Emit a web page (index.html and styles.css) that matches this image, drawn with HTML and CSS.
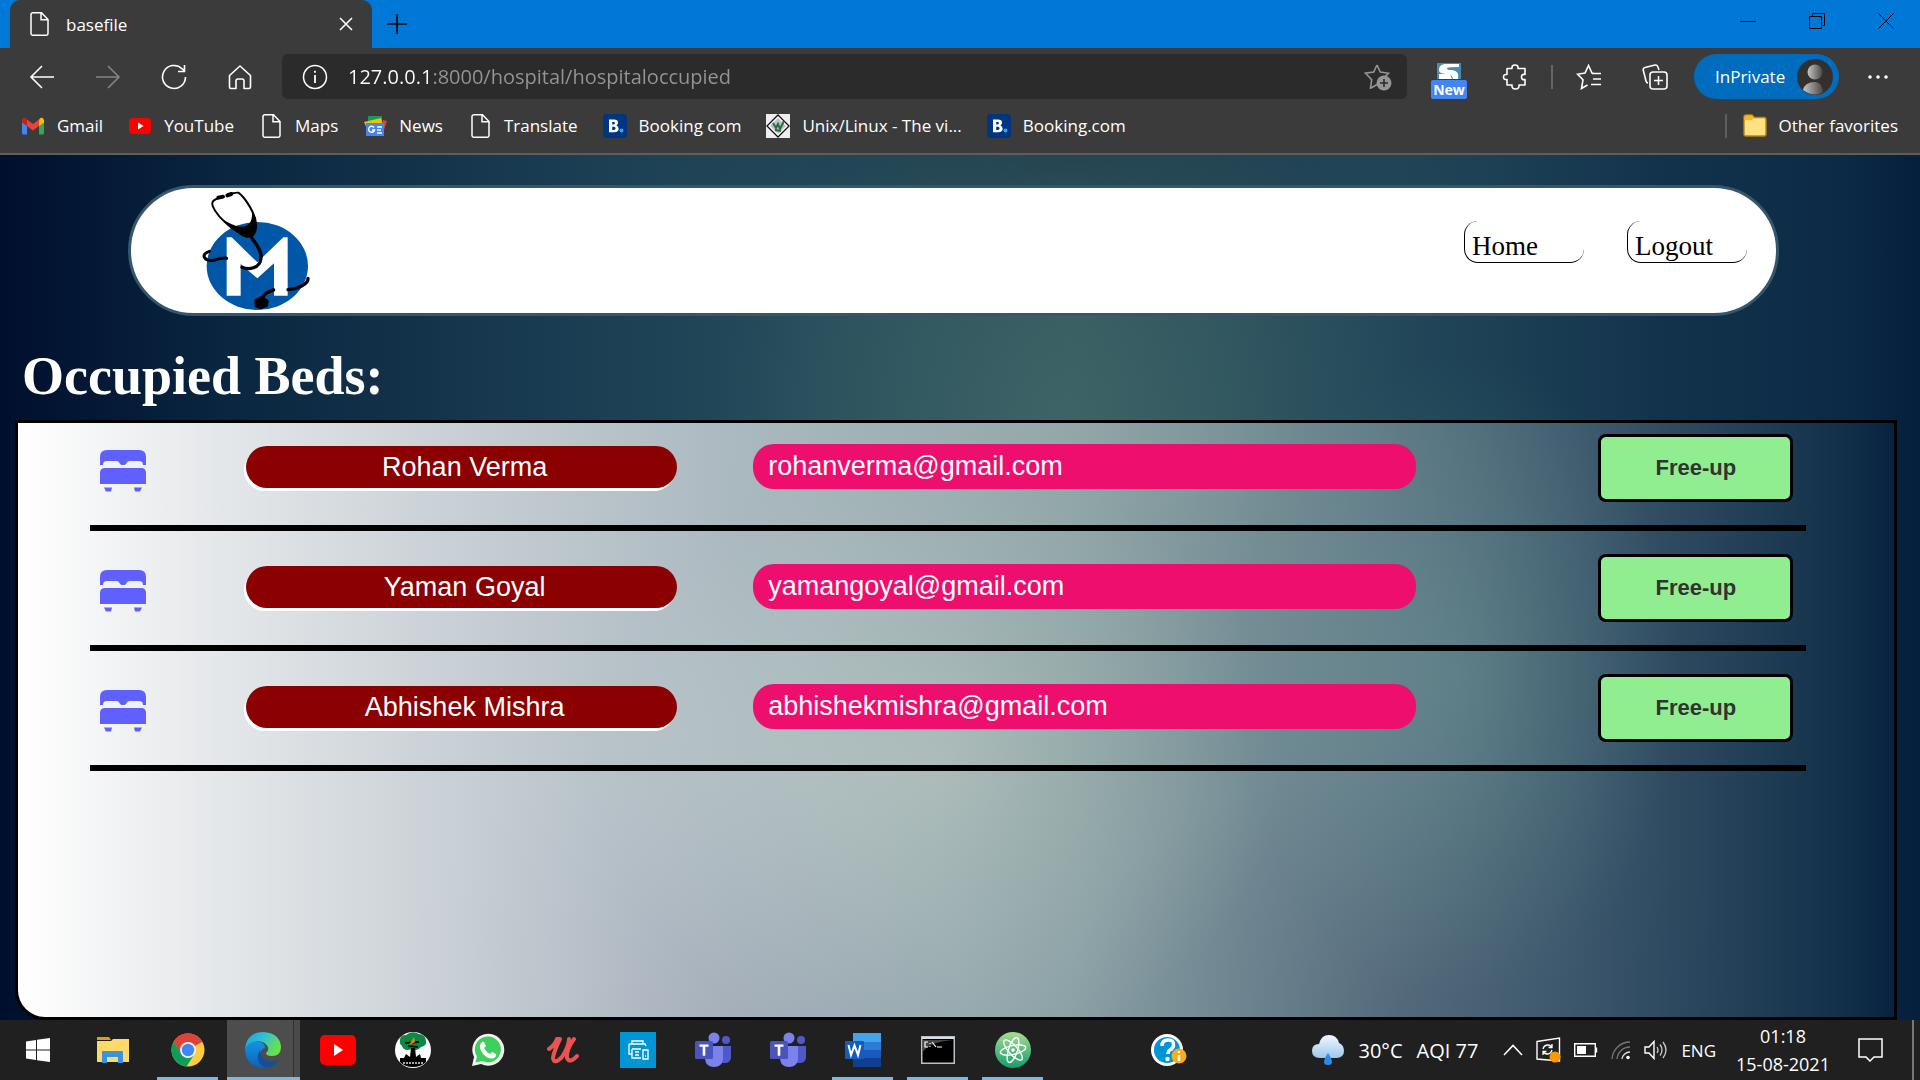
FILE: index.html
```html
<!DOCTYPE html>
<html lang="en">
<head>
<meta charset="utf-8">
<title>basefile</title>
<link rel="stylesheet" href="styles.css">
</head>
<body>
<svg class="defs" width="0" height="0" aria-hidden="true">
  <defs>
    <linearGradient id="edgeTop" x1="0" y1="0" x2="1" y2="0.4"><stop offset="0" stop-color="#1f9fdd"/><stop offset=".5" stop-color="#2fc0d8"/><stop offset="1" stop-color="#6ae04a"/></linearGradient>
    <linearGradient id="edgeBlue" x1="0" y1="0" x2="0" y2="1"><stop offset="0" stop-color="#1793e0"/><stop offset="1" stop-color="#0a63b8"/></linearGradient>
    <linearGradient id="cloud" x1="0" y1="0" x2="0" y2="1"><stop offset="0" stop-color="#f2f8ff"/><stop offset="1" stop-color="#9cc8ee"/></linearGradient>
    <linearGradient id="atomBg" x1="0" y1="0" x2="0" y2="1"><stop offset="0" stop-color="#a5dc90"/><stop offset="1" stop-color="#149e6e"/></linearGradient>
    <linearGradient id="avatarBg" x1="0" y1="0" x2="1" y2="0"><stop offset="0" stop-color="#c8c6c4"/><stop offset="1" stop-color="#4a4846"/></linearGradient>
    <symbol id="page" viewBox="0 0 24 24"><path d="M6 .8h8.500L21 7.500V21.500q0 1.700-1.700 1.700H5.700Q4 23.200 4 21.500V2.500Q4 .8 6 .8zM14 1v6.800h7" fill="none" stroke="#fff" stroke-width="1.500"/></symbol>
    <symbol id="booking" viewBox="0 0 24 24"><rect width="24" height="24" rx="4" fill="#003580"/><path d="M6 5.500h5q4 0 4 3.300 0 1.800-1.600 2.600 2.300.8 2.300 3.200 0 3.700-4.500 3.700H6zm3.200 2.400v2.500h1.300q1.500 0 1.500-1.300t-1.500-1.200zm0 4.800V16h1.600q1.800 0 1.800-1.700t-1.800-1.600z" fill="#fff" fill-rule="evenodd"/><circle cx="18.500" cy="16.500" r="2" fill="#35a8e8"/></symbol>
    <symbol id="bed" viewBox="0 0 46 42"><path d="M0 15V7q0-7 7-7h32q7 0 7 7v8h-3q0-4-4-4h-9q-3 0-4 3l-1.500 1h-3L20 14q-1-3-4-3H7q-4 0-4 4zM0 34V23q0-5 5-5h36q5 0 5 5v11zM4 37.500h8L11 41.500H6zM34 37.500h8l-2 4h-5z" fill="#6060ff"/></symbol>
    <symbol id="teams" viewBox="0 0 36 36"><circle cx="31" cy="8" r="4" fill="#5059c9"/><path d="M25 14h11v12q-1 5-6 5h-5z" fill="#5059c9"/><circle cx="19" cy="6" r="5.500" fill="#7b83eb"/><path d="M10 14h18v13q-1 8-9 8t-9-8z" fill="#7b83eb"/><rect y="9" width="18" height="18" rx="1.500" fill="#4b53bc"/><path d="M4.500 12.500h9v2.300h-3.200v9H7.700v-9H4.500z" fill="#fff"/></symbol>
  </defs>
</svg>

<header class="browser">
  <div class="titlebar">
    <div class="tab">
      <svg class="ico24" aria-hidden="true"><use href="#page"/></svg>
      <span class="tab-title">basefile</span>
      <button class="plain tab-close" aria-label="Close tab"><svg width="14" height="14" viewBox="0 0 14 14"><path d="M1 1l12 12M13 1L1 13" stroke="#fff" stroke-width="1.600"/></svg></button>
    </div>
    <button class="plain new-tab" aria-label="New tab"><svg width="22" height="22" viewBox="0 0 22 22"><path d="M11 1v20M1 11h20" stroke="#000" stroke-width="1.600"/></svg></button>
    <div class="window-controls">
      <button class="plain" aria-label="Minimize"><svg width="16" height="16" viewBox="0 0 16 16"><path d="M0 8.500h16" stroke="#000"/></svg></button>
      <button class="plain" aria-label="Restore"><svg width="16" height="16" viewBox="0 0 16 16"><path d="M.5 3.500h12v12H.5zM3.500 3V.5h12v12H13" fill="none" stroke="#000"/></svg></button>
      <button class="plain" aria-label="Close"><svg width="16" height="16" viewBox="0 0 16 16"><path d="M.5.5l15 15M15.500.5l-15 15" stroke="#000"/></svg></button>
    </div>
  </div>

  <div class="toolbar">
    <button class="plain tool" aria-label="Back"><svg width="26" height="26" viewBox="0 0 26 26"><path d="M25 13H2M13 2L2 13l11 11" fill="none" stroke="#fff" stroke-width="1.600"/></svg></button>
    <button class="plain tool" aria-label="Forward"><svg width="26" height="26" viewBox="0 0 26 26"><path d="M1 13h23M13 2l11 11-11 11" fill="none" stroke="#848484" stroke-width="1.600"/></svg></button>
    <button class="plain tool" aria-label="Refresh"><svg width="26" height="26" viewBox="0 0 26 26"><path d="M24.500 13a11.500 11.500 0 1 1-3.500-8.300L23.500 7M23.500 1v6.500H17" fill="none" stroke="#fff" stroke-width="1.600"/></svg></button>
    <button class="plain tool" aria-label="Home"><svg width="26" height="26" viewBox="0 0 26 26"><path d="M13 2L2.500 11.500V23q0 1.500 1.500 1.500h5V17q0-2 2-2h4q2 0 2 2v7.500h5q1.500 0 1.500-1.500V11.500z" fill="none" stroke="#fff" stroke-width="1.600" stroke-linejoin="round"/></svg></button>
    <div class="address">
      <svg width="26" height="26" viewBox="0 0 26 26" aria-hidden="true"><circle cx="13" cy="13" r="11.500" fill="none" stroke="#fff" stroke-width="1.500"/><path d="M13 11v8M13 6.800v2" stroke="#fff" stroke-width="1.800"/></svg>
      <input class="url" type="text" aria-label="Address" value="127.0.0.1:8000/hospital/hospitaloccupied">
      <button class="plain" aria-label="Add to favorites"><svg width="28" height="28" viewBox="0 0 28 28"><path d="M13 2l3.300 7 8.200 1.200-5 5M8 24.500l-1.500.5 1.200-8.300L1.500 10.200 9.700 9 13 2M7 25l6-3.500" fill="none" stroke="#959595" stroke-width="1.600"/><circle cx="20" cy="20" r="7.500" fill="#959595"/><path d="M20 16v8M16 20h8" stroke="#2b2b2b" stroke-width="1.600"/></svg></button>
    </div>
    <div class="extensions">
      <button class="plain tool new-ext" aria-label="Extension"><svg width="24" height="16" viewBox="0 0 24 16"><path d="M0 0h24v16H0z" fill="#4b89b5"/><path d="M22 1H8Q1 2 2 8q1 3 8 3 5 0 6 5h5q2-8-6-9-6 0-5-2 2-1 12-1z" fill="#fff"/><path d="M2 11h11l2 5H2z" fill="#fff"/></svg><span class="new-badge">New</span></button>
      <button class="plain tool" aria-label="Extensions"><svg width="26" height="26" viewBox="0 0 26 26"><path d="M6 4.500h4q-.5-3.500 3-3.500t3 3.500h7v6q-3.500-.8-3.500 2.500T23 15.500V21h-6q.5 4-3.500 4T10 21H5v-5.500Q1.500 16 1.500 13T5 10.500v-6z" fill="none" stroke="#fff" stroke-width="1.600" stroke-linejoin="round"/></svg></button>
      <span class="divider"></span>
      <button class="plain tool" aria-label="Favorites"><svg width="26" height="26" viewBox="0 0 26 26"><path d="M18 9.500l-2-.5-3.500-7.500L9 9 1.500 10.200l5.500 5.600L5.500 24.500l6-3.500M16 9.500h9M17 15h8M15 20.500h10" fill="none" stroke="#fff" stroke-width="1.600"/></svg></button>
      <button class="plain tool" aria-label="Collections"><svg width="26" height="26" viewBox="0 0 26 26"><path d="M6 19q-1.500 0-2-2L1.200 6Q1 4 3 3.500L13 1q2-.3 2.700 1.500L17 6" fill="none" stroke="#fff" stroke-width="1.600"/><rect x="8" y="8" width="17" height="17" rx="3" fill="none" stroke="#fff" stroke-width="1.600"/><path d="M16.500 12v9M12 16.500h9" stroke="#fff" stroke-width="1.600"/></svg></button>
      <button class="plain profile">InPrivate<svg width="36" height="36" viewBox="0 0 36 36" aria-hidden="true"><circle cx="18" cy="18" r="18" fill="#323130"/><circle cx="18" cy="13" r="7.500" fill="url(#avatarBg)"/><path d="M6 31q2-8 12-8 7 0 8 10-9 6-20-2z" fill="url(#avatarBg)"/></svg></button>
      <button class="plain tool" aria-label="Settings and more"><svg width="20" height="6" viewBox="0 0 20 6"><circle cx="2" cy="3" r="1.800" fill="#fff"/><circle cx="10" cy="3" r="1.800" fill="#fff"/><circle cx="18" cy="3" r="1.800" fill="#fff"/></svg></button>
    </div>
  </div>

  <nav class="bookmarks" aria-label="Favorites bar">
    <a href="#"><svg class="ico24" viewBox="0 0 24 24"><path d="M1 6v13q0 1.500 1.500 1.500H6V10z" fill="#4285f4"/><path d="M23 6v13q0 1.500-1.500 1.500H18V10z" fill="#34a853"/><path d="M18 5.500V12l5-3.500V6q-1-3-3.500-2z" fill="#fbbc04"/><path d="M1 6v2.500l5 3.500V5.500L4.500 4Q1 3.500 1 6z" fill="#c5221f"/><path d="M6 5.500V12l6 4.500 6-4.500V5.500L12 10z" fill="#ea4335"/></svg>Gmail</a>
    <a href="#"><svg class="ico24" viewBox="0 0 24 24"><rect x="1" y="4" width="22" height="16" rx="4" fill="#f00"/><path d="M10 8.500v7l5.500-3.500z" fill="#fff"/></svg>YouTube</a>
    <a href="#"><svg class="ico24"><use href="#page"/></svg>Maps</a>
    <a href="#"><svg class="ico24" viewBox="0 0 24 24"><path d="M5 2h14v8H5z" fill="#0f9d58"/><path d="M1 8l17-4 3 10-15 5z" fill="#fbbc04"/><path d="M20 6l4 1-4 12z" fill="#db4437"/><path d="M3 9h18v13H3z" fill="#4285f4"/><path d="M11 13.500a3 3 0 1 0 .5 2.500H9M14 13h5M14 16h4M14 19h5" fill="none" stroke="#fff" stroke-width="1.400"/></svg>News</a>
    <a href="#"><svg class="ico24"><use href="#page"/></svg>Translate</a>
    <a href="#"><svg class="ico24"><use href="#booking"/></svg>Booking com</a>
    <a href="#"><svg class="ico24" viewBox="0 0 24 24"><path d="M0 0h24v24H0z" fill="#eee"/><path d="M12 1l11 11-11 11L1 12z" fill="#fff" stroke="#111" stroke-width="1.300"/><path d="M12 4l8 8-8 8-8-8z" fill="#bdc4c0"/><path d="M7 9l3 5 2-4 2 5 4-8M9 16l6 1" fill="none" stroke="#2d6a44" stroke-width="2"/></svg>Unix/Linux - The vi...</a>
    <a href="#"><svg class="ico24"><use href="#booking"/></svg>Booking.com</a>
    <a href="#" class="other"><svg class="ico24" viewBox="0 0 24 24"><path d="M1 3q0-2 2-2h6l2 2.500h10q2 0 2 2V20q0 2-2 2H3q-2 0-2-2z" fill="#ffe082" stroke="#b8860b" stroke-width="1.400"/><path d="M1.500 6V3q0-1.500 1.500-1.500h6l2 2L9 6z" fill="#f5b91c"/></svg>Other favorites</a>
  </nav>
</header>

<main class="site">
  <nav class="navbar" aria-label="Main">
    <svg class="logo" viewBox="240 55 336 369" role="img" aria-label="Medical logo">
      <ellipse cx="412" cy="286" rx="152" ry="132" fill="#0057a8"/>
      <path d="M320 200h15l77 75 78-75h13v175h-41v-97l-50 45-50-43v95h-42z" fill="#fff"/>
      <g fill="none" stroke="#000" stroke-linecap="round">
        <path d="M296 82C278 88 274 95 278 106 286 128 308 150 335 172" stroke-width="6"/>
        <path d="M325 72Q345 65 355 66C372 78 398 115 405 145" stroke-width="6"/>
        <path d="M295 81l14-3M322 74l12-4" stroke-width="12"/>
        <path d="M392 195C405 220 425 235 423 262 420 295 385 298 366 290" stroke-width="10"/>
        <path d="M268 242C240 250 252 275 285 268 300 262 310 261 320 263" stroke-width="9"/>
        <path d="M564 323C565 340 535 355 504 357M461 358C440 362 430 372 425 388" stroke-width="10"/>
      </g>
      <path d="M302 142C335 165 362 172 377 166 393 160 397 145 396 122L408 142C415 170 410 188 398 198 388 205 372 200 360 192 340 180 318 160 302 142z"/>
      <path d="M405 388l20-10 19 12-2 16-20 8-16-6z" stroke="#000" stroke-width="4" stroke-linejoin="round"/>
    </svg>
    <div class="nav-links">
      <a href="#">Home</a>
      <a href="#">Logout</a>
    </div>
  </nav>

  <h1>Occupied Beds:</h1>

  <section class="panel" aria-label="Occupied beds">
    <table class="beds">
      <colgroup><col class="col-icon"><col class="col-name"><col class="col-email"><col class="col-action"></colgroup>
      <tbody>
        <tr><td><svg class="bed" role="img" aria-label="Bed"><use href="#bed"/></svg></td><td><span class="pill name">Rohan Verma</span></td><td><span class="pill email">rohanverma@gmail.com</span></td><td><button class="free">Free-up</button></td></tr>
        <tr><td><svg class="bed" role="img" aria-label="Bed"><use href="#bed"/></svg></td><td><span class="pill name">Yaman Goyal</span></td><td><span class="pill email">yamangoyal@gmail.com</span></td><td><button class="free">Free-up</button></td></tr>
        <tr><td><svg class="bed" role="img" aria-label="Bed"><use href="#bed"/></svg></td><td><span class="pill name">Abhishek Mishra</span></td><td><span class="pill email">abhishekmishra@gmail.com</span></td><td><button class="free">Free-up</button></td></tr>
      </tbody>
    </table>
  </section>
</main>

<footer class="taskbar">
  <div class="apps">
    <button class="plain app" aria-label="Start"><svg width="24" height="24" viewBox="0 0 24 24"><path d="M0 3.500L10 2v9.500H0zM11 1.800L24 0v11.500H11zM0 12.500h10V22L0 20.500zM11 12.500h13V24l-13-1.800z" fill="#fff"/></svg></button>
    <button class="plain app" aria-label="File Explorer"><svg width="32" height="32" viewBox="0 0 32 32"><path d="M0 3h12l2 3H0z" fill="#e0a100"/><path d="M0 7h14l2-2h16v23H0z" fill="#ffd96a"/><path d="M5 29V18q0-1 1-1h19q1 0 1 1v11h-5v-6H10v6z" fill="#3a94dc"/></svg></button>
    <button class="plain app open" aria-label="Chrome"><svg width="34" height="34" viewBox="0 0 34 34"><circle cx="17" cy="17" r="16.500" fill="#ffcd40"/><path d="M17 17L2.700 8.700A16.500 16.500 0 0 1 31.300 8.700z" fill="#db4437"/><path d="M17 9h14.400a16.500 16.500 0 0 0-28.700-.3L10 21z" fill="#db4437"/><path d="M2.700 8.700A16.500 16.500 0 0 0 15.500 33.400L23 22l-6-5-7 3z" fill="#0f9d58"/><circle cx="17" cy="17" r="8" fill="#f1f1f1"/><circle cx="17" cy="17" r="6.200" fill="#4285f4"/></svg></button>
    <button class="plain app open active" aria-label="Edge"><svg width="36" height="36" viewBox="0 0 36 36"><path d="M0 18Q1 9 9 9q11 0 11 7-6 2-5 9 2 7 10 7 5-1 8-4-4 8-14 8Q1 35 0 18z" fill="url(#edgeBlue)"/><path d="M0 17Q2 0 18 0q17 1 18 15 0 9-9 9-6 0-6-3 3-2 2-6Q20 9 12 9 4 9 0 17z" fill="url(#edgeTop)"/><path d="M15 18q-6 10 4 17.500 10 1 15-8-8 4-14 0-5-3-5-9.500z" fill="#144f9e"/></svg></button>
    <button class="plain app" aria-label="YouTube"><svg width="36" height="30" viewBox="0 0 36 30"><rect width="36" height="30" rx="5" fill="#f00"/><path d="M14 9v12l9-6z" fill="#fff"/></svg></button>
    <button class="plain app" aria-label="Tree logo"><svg width="36" height="36" viewBox="0 0 36 36"><circle cx="18" cy="18" r="18" fill="#fff"/><path d="M5 8q0-5 6-5 6-5 13-1 7 1 7 7 1 5-5 6-4 5-9 2-8 3-10-3-3-2-2-6z" fill="#0b8a43"/><path d="M10 11l14-1M13 14l10 1" stroke="#111" stroke-width="2"/><path d="M19 5l-5 8 6-3z" fill="#f47c20"/><path d="M16 16h4l1 9 4-3 1 4h5v4q-5 5-13 5T5 30v-4h4l2-4 4 3z" fill="#000"/><path d="M8 31h20" stroke="#ddd" stroke-width="1.500" stroke-dasharray="2 1"/></svg></button>
    <button class="plain app" aria-label="WhatsApp"><svg width="34" height="34" viewBox="0 0 34 34"><path d="M1 33l2-9A16 16 0 1 1 10 31z" fill="#f4f4f4"/><path d="M4.500 29.500l1.500-6A13 13 0 1 1 11 28z" fill="#3fcf5d"/><path d="M11 9q2-1 3 2l1 2-2 2q2 4 6 6l2-2 4 2q1 2-2 4-5 2-11-4-6-8-1-12z" fill="#fff"/></svg></button>
    <button class="plain app" aria-label="Udemy"><svg width="32" height="28" viewBox="0 0 32 28"><path d="M2 13Q8 9 10 3L13 3Q7 15 6 22q1 7 9-1Q22 10 22 3M27 3Q19 14 20 22q3 6 10-2" fill="none" stroke="#eb5252" stroke-width="4" stroke-linecap="round" stroke-linejoin="round"/></svg></button>
    <button class="plain app" aria-label="Printer"><svg width="36" height="36" viewBox="0 0 36 36"><path d="M0 0h36v36H0z" fill="#0096d6"/><path d="M12 12V9h11v3M12 22H9V13q0-1 1-1h15l1 2M12 17h9M12 17v9h9M15 20h4M15 23h4M23 18h5v9h-5zM25 24h1" fill="none" stroke="#fff" stroke-width="1.300"/></svg></button>
    <button class="plain app" aria-label="Teams"><svg width="36" height="36"><use href="#teams"/></svg></button>
    <button class="plain app" aria-label="Teams chat"><svg width="36" height="36"><use href="#teams"/></svg></button>
    <button class="plain app open" aria-label="Word"><svg width="36" height="34" viewBox="0 0 36 34"><path d="M8 0h28v9H8z" fill="#41a5ee"/><path d="M8 9h28v8H8z" fill="#2b7cd3"/><path d="M8 17h28v8H8z" fill="#185abd"/><path d="M8 25h28v9H8z" fill="#103f91"/><rect y="8" width="19" height="18" rx="1" fill="#185abd"/><path d="M3.500 12l2.500 10 3.500-9.500L13 22l2.500-10" fill="none" stroke="#fff" stroke-width="2"/></svg></button>
    <button class="plain app open" aria-label="Command Prompt"><svg width="34" height="28" viewBox="0 0 34 28"><path d="M.5.5h33v27H.5z" fill="#000" stroke="#b8c0c8" stroke-width="2"/><path d="M1 1h32v2H1z" fill="#d8dde2"/><path d="M2 4h30Q8 6 2 16z" fill="#444"/><path d="M7 6H4v5h3M9 7v1M9 10v1M11 6l4 5M16 11h5" fill="none" stroke="#fff" stroke-width="1.200"/></svg></button>
    <button class="plain app open" aria-label="Atom"><svg width="36" height="36" viewBox="0 0 36 36"><circle cx="18" cy="18" r="18" fill="url(#atomBg)"/><g fill="none" stroke="#fff" stroke-width="1.400"><ellipse cx="18" cy="18" rx="13" ry="4.500" transform="rotate(-12 18 18)"/><ellipse cx="18" cy="18" rx="13" ry="4.500" transform="rotate(48 18 18)"/><ellipse cx="18" cy="18" rx="13" ry="4.500" transform="rotate(108 18 18)"/></g><circle cx="18" cy="18" r="1.800" fill="#fff"/></svg></button>
  </div>
  <button class="plain help" aria-label="Help"><svg width="36" height="32" viewBox="0 0 36 32"><circle cx="16" cy="16" r="16" fill="#fff"/><circle cx="16" cy="16" r="13" fill="#0096d6"/><path d="M11 12q0-6 6-6t5.500 5q0 3-3.500 5-2 1-2 4" fill="none" stroke="#fff" stroke-width="3.500"/><circle cx="16.500" cy="25" r="2.200" fill="#fff"/><circle cx="28" cy="22" r="7.500" fill="#f9ab18"/><path d="M28 21v6M28 17v2" stroke="#fff" stroke-width="2.400"/></svg></button>
  <div class="tray">
    <button class="plain weather"><svg width="32" height="30" viewBox="0 0 32 30" aria-hidden="true"><path d="M8 23Q0 23 0 16t7-7Q9 0 17 0t10 8q5 2 5 8t-7 7z" fill="url(#cloud)"/><path d="M16 18q8 12 0 12t0-12z" fill="#2c8be8"/></svg><span>30°C</span><span>AQI 77</span></button>
    <button class="plain" aria-label="Hidden icons"><svg width="20" height="12" viewBox="0 0 20 12"><path d="M1 11L10 1.500 19 11" fill="none" stroke="#fff" stroke-width="1.600"/></svg></button>
    <button class="plain" aria-label="Update"><svg width="25" height="26" viewBox="0 0 25 26"><path d="M1 4.500L23.500 1v23L1 22z" fill="none" stroke="#fff" stroke-width="1.400"/><path d="M7 12q1-4 5-4 2 0 4 2M16 7v3.500h-3.500M16 13q-1 4-5 4-2 0-4-2M7 18v-3.500h3.500" fill="none" stroke="#fff" stroke-width="1.300"/><circle cx="19" cy="20" r="5.500" fill="#ff9800"/></svg></button>
    <button class="plain" aria-label="Battery"><svg width="24" height="14" viewBox="0 0 24 14"><path d="M.7.700h20.600v12.600H.7zM22.500 4.500v5" fill="none" stroke="#fff" stroke-width="1.400"/><path d="M3 3h9v8H3z" fill="#fff"/></svg></button>
    <button class="plain" aria-label="Network"><svg width="20" height="20" viewBox="0 0 20 20"><path d="M1 19A18 18 0 0 1 19 2M6 19A13 13 0 0 1 19 7" fill="none" stroke="#777" stroke-width="1.300"/><path d="M11 19a8 8 0 0 1 8-7" fill="none" stroke="#ddd" stroke-width="1.400"/><circle cx="17" cy="17.500" r="1.800" fill="#fff"/></svg></button>
    <button class="plain" aria-label="Volume"><svg width="24" height="20" viewBox="0 0 24 20"><path d="M1 7h4l5-5.500v17L5 13H1z" fill="none" stroke="#fff" stroke-width="1.400"/><path d="M13 7q2 3 0 6M16 4.500q4 5.500 0 11M19 2q6 8 0 16" fill="none" stroke="#ccc" stroke-width="1.300"/></svg></button>
    <button class="plain lang">ENG</button>
    <button class="plain clock"><span>01:18</span><span>15-08-2021</span></button>
    <button class="plain notes" aria-label="Notifications"><svg width="25" height="24" viewBox="0 0 25 24"><path d="M1 1h23v18h-8l-4 4-4-4H1z" fill="none" stroke="#fff" stroke-width="1.500"/></svg></button>
    <span class="show-desktop"></span>
  </div>
</footer>
</body>
</html>
```
FILE: styles.css
```css
* { box-sizing: border-box; }
body {
  margin: 0;
  min-height: 100vh;
  display: flex;
  flex-direction: column;
  font-family: "Open Sans", "Noto Sans", sans-serif;
  color: #fff;
  background: #001130;
}
svg { display: block; flex: none; }
.defs { position: absolute; }
a { color: inherit; text-decoration: none; }
.plain {
  border: 0;
  padding: 0;
  background: none;
  color: inherit;
  font: inherit;
  display: flex;
  align-items: center;
  justify-content: center;
}
.ico24 { width: 24px; height: 24px; }

/* Browser chrome */
.browser { background: #3b3b3b; border-bottom: 2px solid #5e5e5e; }
.titlebar { display: flex; height: 48px; background: #0078d7; padding-left: 10px; }
.tab {
  display: flex;
  align-items: center;
  width: 362px;
  padding: 0 19px 0 17px;
  gap: 15px;
  background: #3b3b3b;
  border-radius: 10px 10px 0 0;
  font-size: 17px;
}
.tab-title { flex: 1; }
.new-tab { width: 50px; }
.window-controls { display: flex; margin-left: auto; }
.window-controls button { width: 69px; height: 42px; }
.toolbar { display: flex; align-items: center; padding: 0 9px; height: 57px; }
.tool { width: 66px; height: 45px; }
.address {
  flex: 1;
  display: flex;
  align-items: center;
  height: 45px;
  margin: 0 9px;
  padding: 0 15px 0 20px;
  gap: 20px;
  background: #2b2b2b;
  border-radius: 6px;
}
.url {
  flex: 1;
  min-width: 0;
  height: 45px;
  border: 0;
  padding: 0;
  outline: 0;
  font: 20px "Open Sans", "Noto Sans", sans-serif;
  color: transparent;
  background: linear-gradient(to right, #fff 85px, #959595 85px);
  -webkit-background-clip: text;
  background-clip: text;
}
.extensions { display: flex; align-items: center; }
.new-ext { flex-direction: column; justify-content: flex-end; }
.new-badge {
  width: 36px;
  height: 19px;
  margin-top: 1px;
  border-radius: 2px;
  background: #4285f4;
  font: bold 14px/19px "Open Sans", sans-serif;
}
.divider { width: 2px; height: 24px; margin: 0 3px; background: #666; }
.profile {
  width: 145px;
  height: 45px;
  margin: 0 6px;
  padding: 0 6px 0 21px;
  justify-content: space-between;
  border-radius: 23px;
  background: #006cbe;
  font-size: 17px;
}
.bookmarks {
  display: flex;
  align-items: center;
  gap: 25px;
  height: 48px;
  padding: 0 22px 7px 21px;
  font-size: 17px;
  white-space: nowrap;
}
.bookmarks a { display: flex; align-items: center; gap: 12px; }
.bookmarks .other { margin-left: auto; padding-left: 16px; border-left: 2px solid #5e5e5e; }

/* Hospital page */
.site {
  flex: 1;
  display: flex;
  flex-direction: column;
  padding-top: 30px;
  background:
    radial-gradient(ellipse 340px 340px at 55% 30%, rgba(85, 120, 112, .4), transparent),
    radial-gradient(ellipse 340px 300px at 49% 70%, rgba(115, 145, 130, .6), transparent),
    radial-gradient(ellipse 220px 320px at 76% 60%, rgba(75, 130, 125, .35), transparent),
    radial-gradient(ellipse 340px 260px at 73% 100%, rgba(10, 35, 65, .55), transparent),
    radial-gradient(ellipse 300px 320px at 35% 105%, rgba(0, 15, 60, .6), transparent),
    radial-gradient(ellipse 420px 140px at 56% 0, rgba(15, 40, 60, .5), transparent),
    linear-gradient(to right, #000f2d 0, #0a2640 12%, #193b51 28%, #254c5b 42%, #2f565f 56%, #24495a 72%, #12324c 87%, #0c2a45 96%, #051f3d 100%);
}
.navbar {
  display: flex;
  align-items: center;
  justify-content: space-between;
  height: 131px;
  margin: 0 141px 0 128px;
  padding: 0 29px 0 69px;
  border: 3px solid #36566b;
  border-radius: 66px;
  background: #fff;
}
.logo { width: 112px; height: 123px; }
.nav-links { display: flex; gap: 43px; padding-bottom: 18px; }
.nav-links a {
  width: 120px;
  height: 42px;
  padding: 10px 0 0 7px;
  border: solid #000;
  border-width: 0 0 1px 1px;
  border-radius: 14px;
  font: 27px/30px "Liberation Serif", "Times New Roman", serif;
  color: #000;
}
h1 {
  margin: 29px 0 13px 22px;
  font: bold 54px/62px "Liberation Serif", "Times New Roman", serif;
}
.panel {
  flex: 1;
  margin: 0 23px 0 15px;
  padding: 0 88px 20px 72px;
  border: 3px solid #000;
  border-radius: 0 0 0 30px;
  background: linear-gradient(to right, #fff, transparent);
}
.beds { width: 100%; table-layout: fixed; border-spacing: 0; }
.col-icon { width: 9.1%; }
.col-name { width: 29.9%; }
.col-email { width: 48.9%; }
.col-action { width: 12.1%; }
.beds td { padding: 11px 0 23px; border-bottom: 6px solid #000; vertical-align: middle; }
.beds tr + tr td { padding-top: 23px; }
.bed { width: 46px; height: 42px; margin: 5px 0 0 10px; }
.pill {
  display: block;
  margin-bottom: 3px;
  border-radius: 21px;
  font: 27px/42px "Liberation Sans", Arial, sans-serif;
}
.name {
  width: 84%;
  padding-left: 6px;
  background: #8b0000;
  box-shadow: -2px 3px 0 #fff;
  text-align: center;
}
.email { width: 79%; padding: 1px 15px 2px; margin-left: -6px; background: #ee0e6e; }
.free {
  display: block;
  width: 195px;
  height: 68px;
  border: 3px solid #000;
  border-radius: 8px;
  background: #90ee90;
  color: #333;
  font: bold 22px "Liberation Sans", Arial, sans-serif;
}

/* Taskbar */
.taskbar { display: flex; align-items: stretch; height: 60px; background: #202020; }
.apps { display: flex; }
.app { position: relative; width: 75px; }
.open::after {
  content: "";
  position: absolute;
  left: 7px;
  right: 7px;
  bottom: 0;
  height: 3px;
  background: #76b9ed;
}
.active { background: linear-gradient(to right, transparent 2px, #4d4d4d 2px 68px, #303030 68px 69px, #4a4a4a 69px); }
.active::after { left: 2px; right: 0; }
.help { width: 36px; margin-left: 101px; }
.tray { display: flex; align-items: center; gap: 13px; margin-left: auto; font-size: 17px; }
.weather { gap: 14px; margin-right: 12px; font-size: 20px; }
.clock { flex-direction: column; width: 108px; font-size: 18px; line-height: 28px; }
.notes { margin: 0 16px 0 8px; }
.show-desktop { align-self: stretch; width: 8px; border-left: 2px solid #777; }
```
